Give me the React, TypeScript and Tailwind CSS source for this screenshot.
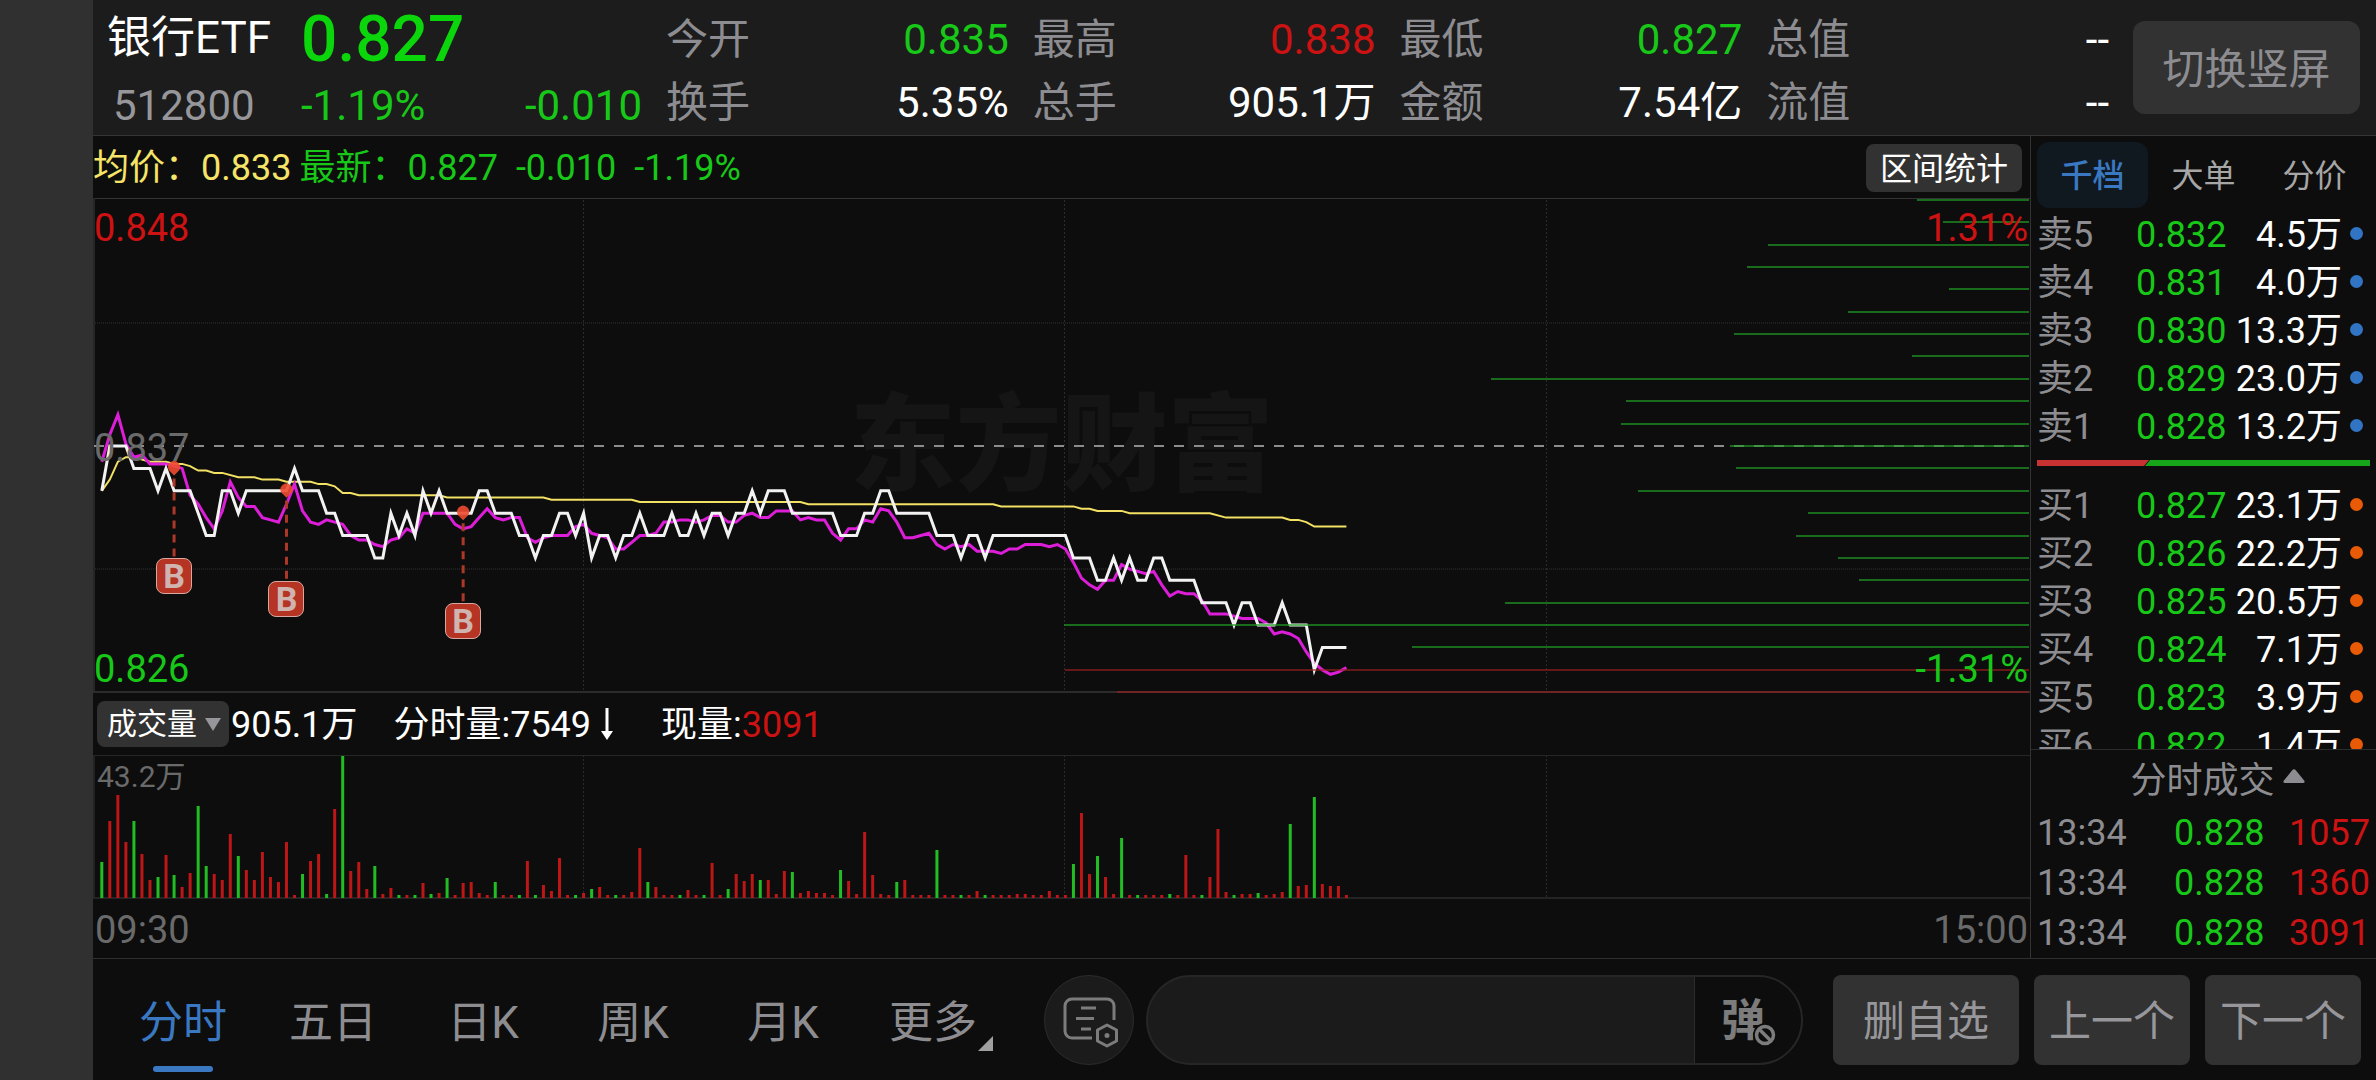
import React from "react";

/* ---------- market data ---------- */

const QUOTES = [
  { label: "今开", value: "0.835", tone: "text-[#18c818]" },
  { label: "最高", value: "0.838", tone: "text-[#cc1212]" },
  { label: "最低", value: "0.827", tone: "text-[#18c818]" },
  { label: "总值", value: "--", tone: "text-white" },
  { label: "换手", value: "5.35%", tone: "text-white" },
  { label: "总手", value: "905.1万", tone: "text-white" },
  { label: "金额", value: "7.54亿", tone: "text-white" },
  { label: "流值", value: "--", tone: "text-white" },
];

const SELLS = [
  ["卖5", "0.832", "4.5万"],
  ["卖4", "0.831", "4.0万"],
  ["卖3", "0.830", "13.3万"],
  ["卖2", "0.829", "23.0万"],
  ["卖1", "0.828", "13.2万"],
];

const BUYS = [
  ["买1", "0.827", "23.1万"],
  ["买2", "0.826", "22.2万"],
  ["买3", "0.825", "20.5万"],
  ["买4", "0.824", "7.1万"],
  ["买5", "0.823", "3.9万"],
  ["买6", "0.822", "1.4万"],
];

const TICKS = [
  ["13:34", "0.828", "1057"],
  ["13:34", "0.828", "1360"],
  ["13:34", "0.828", "3091"],
];

/* Minute series: distance below the 0.837 reference, price in 0.001 steps. */
const PRICE = [
  2, 0, 0, 0, 1, 1, 1, 2, 1, 2, 2, 2, 3, 4, 4, 2, 2, 3, 2, 2, 2, 2, 2, 2, 1, 2, 2, 2, 3, 3, 4, 4, 4, 4, 5, 5, 3, 4, 3,
  4, 2, 3, 2, 3, 3, 3, 3, 2, 2, 3, 3, 3, 4, 4, 5, 4, 4, 3, 3, 4, 3, 5, 4, 4, 5, 4, 4, 3, 4, 4, 4, 3, 4, 4, 3, 4, 3, 3,
  4, 3, 3, 2, 3, 2, 2, 2, 3, 3, 3, 3, 3, 3, 4, 4, 4, 3, 3, 2, 2, 3, 3, 3, 3, 3, 4, 4, 4, 5, 4, 4, 5, 4, 4, 4, 4, 4, 4,
  4, 4, 4, 4, 5, 5, 5, 6, 6, 5, 6, 5, 6, 6, 5, 5, 6, 6, 6, 6, 7, 7, 7, 7, 8, 7, 7, 8, 8, 8, 7, 8, 8, 8, 10, 9, 9, 9,
  9,
];

/* Leading index, in 0.0001 steps. */
const LEAD = [
  7, -5, -14, -1, 5, 4, 8, 8, 8, 9, 10, 22, 26, 32, 37, 29, 16, 23, 27, 27, 32, 33, 34, 26, 17, 29, 34, 35, 33, 34, 35,
  40, 42, 42, 44, 45, 42, 41, 37, 39, 30, 30, 30, 30, 35, 37, 36, 32, 28, 32, 33, 32, 32, 41, 43, 41, 40, 40, 40, 36,
  35, 39, 40, 41, 46, 46, 43, 40, 40, 39, 34, 34, 33, 33, 34, 33, 31, 31, 34, 34, 31, 30, 32, 32, 29, 29, 29, 33, 32,
  33, 33, 39, 42, 37, 37, 33, 34, 28, 29, 34, 41, 41, 40, 39, 44, 46, 44, 45, 44, 47, 47, 47, 48, 46, 46, 44, 44, 44,
  45, 44, 46, 52, 59, 62, 64, 60, 60, 53, 55, 56, 57, 56, 62, 67, 65, 66, 66, 69, 75, 75, 75, 76, 77, 77, 77, 79, 84,
  83, 84, 86, 92, 97, 100, 102, 101, 99,
];

/* Average price, [minute, 0.0001 steps] at each change of slope. */
const AVERAGE: [number, number][] = [
  [0, 20], [1, 15], [2, 7], [3, 5], [4, 5], [6, 7], [8, 7], [9, 8], [10, 8], [11, 9], [12, 11], [13, 11], [14, 12],
  [15, 12], [17, 14], [19, 14], [20, 15], [22, 15], [23, 16], [26, 16], [27, 17], [28, 17], [29, 18], [30, 21],
  [31, 21], [32, 22], [42, 22], [43, 23], [55, 23], [56, 24], [66, 24], [67, 25], [87, 25], [88, 26], [111, 26],
  [112, 27], [121, 27], [122, 28], [123, 28], [124, 29], [127, 29], [128, 30], [138, 30], [140, 32], [147, 32],
  [148, 33], [149, 33], [150, 34], [151, 36], [155, 36],
];

/* Length of each horizontal depth line, from the top price downwards. */
const DEPTH = [
  112, 86, 261, 282, 80, 181, 295, 117, 538, 403, 408, 299, 293, 391, 221, 233, 191, 170, 524, 965, 617, 964, 912,
];

const VOLUME = (
  "g36 r77 r103 r56 g77 r44 r18 g21 r43 g23 r11 r25 g92 g32 r24 r18 r64 g42 r28 r18 r46 r21 r16 r56 r3 g24 r37 r44 g4 " +
  "r89 g142 r27 r36 r9 g32 r4 r10 g3 r3 g3 r15 g4 r5 g20 r3 r15 r16 r5 r3 g16 r3 r3 g3 r37 g3 r13 r7 r40 r3 g3 r5 g9 " +
  "r11 r3 g3 r3 r6 r50 g16 r11 r3 r3 g3 r8 r3 g3 r35 r3 g9 r24 r17 r24 g18 r18 r4 r27 g26 r5 r7 r5 r5 r3 g28 r17 r4 " +
  "r66 r23 r4 r3 g16 r18 r3 r3 r3 g48 r3 r3 g3 r3 r7 g3 r3 r3 r3 r4 r4 r3 r3 r7 r3 r3 g34 r85 r24 g42 r21 r4 g60 r3 " +
  "g3 r3 r3 r3 g4 r3 r43 r3 g3 r21 r69 r6 g3 r4 r4 g5 r3 r4 r6 g74 r12 r13 g101 r14 r12 r12 r3"
).split(" ");

const TRADES = [
  { minute: 9, level: 1 },
  { minute: 23, level: 2 },
  { minute: 45, level: 3 },
];

/* ---------- chart geometry ---------- */

const W = 1937;
const H = 495;
const VH = 144;
const REF = 248;
const STEP = 22.386;
const xAt = (minute: number) => 8.8 + minute * 8.03;
const yAt = (level: number) => REF + level * STEP;
const toPoints = (pairs: [number, number][]) =>
  pairs.map(([m, l]) => `${xAt(m).toFixed(1)},${yAt(l).toFixed(1)}`).join(" ");

const pricePoints = toPoints(PRICE.map((l, i) => [i, l]));
const leadPoints = toPoints(LEAD.map((l, i) => [i, l / 10]));
const averagePoints = toPoints(AVERAGE.map(([m, l]) => [m, l / 10]));
const GRID_MINUTES = [60, 120, 180];

function PriceChart() {
  return (
    <div className="relative min-h-0 flex-1">
      <div className="absolute inset-0 flex items-center justify-center overflow-hidden text-[106px] leading-none font-black text-[#151515]">
        <span>东方财富</span>
      </div>
      <svg
        className="absolute inset-0 h-full w-full"
        viewBox={`0 0 ${W} ${H}`}
        preserveAspectRatio="none"
        fill="none"
        role="img"
        aria-label="分时走势图"
      >
        <path d={`M0 0.5H${W}`} stroke="#333333" />
        <path d={`M1 0V${H}`} stroke="#262626" strokeWidth="2" />
        <path d={`M0 494H${W}`} stroke="#2c2c2c" strokeWidth="2" />
        {GRID_MINUTES.map((m) => (
          <path key={m} d={`M${Math.round(xAt(m)) - 0.5} 2V${H}`} stroke="#2b2b2b" strokeDasharray="2 2" />
        ))}
        <path d={`M0 125H${W}M0 371H${W}`} stroke="#202020" strokeWidth="2" strokeDasharray="1 1" />
        <path d={`M1 ${REF}H${W}`} stroke="#8c8c8c" strokeWidth="2" strokeDasharray="10 10" />
        <polyline points={averagePoints} stroke="#f2e164" strokeWidth="2" />
        <polyline points={leadPoints} stroke="#dc1ed8" strokeWidth="3" />
        <polyline points={pricePoints} stroke="#f2f2f2" strokeWidth="3" />
        {DEPTH.map((len, i) => (
          <path
            key={i}
            d={`M${W - 1 - len} ${Math.round(1.75 + i * STEP)}H${W - 1}`}
            stroke={i > 20 ? "#a02020" : "#1f9a22"}
            strokeOpacity={i > 20 ? 0.6 : 0.68}
            strokeWidth="2"
          />
        ))}
        {TRADES.map(({ minute, level }) => {
          const x = xAt(minute);
          const y = yAt(level);
          return (
            <g key={minute}>
              <path d={`M${x} ${y + 10}V${y + 90}`} stroke="#ab3829" strokeWidth="3" strokeDasharray="8 6" />
              <path
                d={`M${x} ${y + 7}L${x - 5} ${y + 2}A6 6 0 1 1 ${x + 5} ${y + 2}Z`}
                fill="#f04a30"
                fillOpacity="0.9"
              />
            </g>
          );
        })}
      </svg>
      {TRADES.map(({ minute, level }) => (
        <span
          key={minute}
          className="absolute flex h-9 w-9 -translate-x-1/2 items-center justify-center rounded-lg border border-[#d8a8a0] bg-[#b53424] text-[34px] leading-none font-bold text-[#d0b4b0]"
          style={{ left: `${(xAt(minute) / W) * 100}%`, top: `${((yAt(level) + 90) / H) * 100}%` }}
        >
          B
        </span>
      ))}
      <span className="absolute top-[7px] left-px text-[38px] leading-[46px] text-[#cc1212]">0.848</span>
      <span className="absolute top-[227px] left-px text-[38px] leading-[46px] text-[#6a6a6a]">0.837</span>
      <span className="absolute bottom-px left-px text-[38px] leading-[46px] text-[#18c818]">0.826</span>
      <span className="absolute top-[7px] right-0.5 text-[38px] leading-[46px] text-[#cc1212]">1.31%</span>
      <span className="absolute right-0.5 bottom-px text-[38px] leading-[46px] text-[#18c818]">-1.31%</span>
    </div>
  );
}

function VolumeChart() {
  return (
    <div className="relative h-36 shrink-0">
      <svg
        className="block h-full w-full"
        viewBox={`0 0 ${W} ${VH}`}
        preserveAspectRatio="none"
        fill="none"
        role="img"
        aria-label="成交量图"
      >
        <path d={`M0 0.5H${W}`} stroke="#262626" />
        <path d={`M1 0V${VH}`} stroke="#222222" strokeWidth="2" />
        <path d={`M0 143H${W}`} stroke="#242424" strokeWidth="2" />
        {GRID_MINUTES.map((m) => (
          <path key={m} d={`M${Math.round(xAt(m)) - 0.5} 0V${VH}`} stroke="#2b2b2b" strokeDasharray="2 2" />
        ))}
        {VOLUME.map((bar, i) => {
          const h = Number(bar.slice(1));
          return (
            <rect
              key={i}
              x={xAt(i) - 1.5}
              y={143 - h}
              width="3"
              height={h}
              fill={bar[0] === "g" ? "#22bd22" : "#bd1616"}
            />
          );
        })}
      </svg>
      <span className="absolute top-1 left-1 text-[30px] leading-9 text-[#6a6a6a]">43.2万</span>
    </div>
  );
}

/* ---------- header ---------- */

function Header() {
  return (
    <header className="flex h-[136px] shrink-0 items-center border-b border-[#353535] bg-[#1c1c1c] pr-4 pl-3.5">
      <div className="flex w-[535px] shrink-0 pt-1.5">
        <div className="flex w-[170px] flex-col">
          <h1 className="text-[44px] leading-[66px] font-normal whitespace-nowrap text-white">银行ETF</h1>
          <span className="pt-1 pl-1.5 text-[42px] leading-[62px] text-[#97979b]">512800</span>
        </div>
        <div className="ml-6 flex flex-1 flex-col">
          <span className="text-[64px] leading-[70px] font-medium text-[#0bd50b]">0.827</span>
          <span className="flex justify-between text-[42px] leading-[62px] text-[#18c818]">
            <span>-1.19%</span>
            <span>-0.010</span>
          </span>
        </div>
      </div>
      <dl className="ml-6 grid flex-1 grid-cols-4 gap-x-6 pt-1.5">
        {QUOTES.map((q) => (
          <div key={q.label} className="flex justify-between text-[42px] leading-[63px]">
            <dt className="text-[#8d8d91]">{q.label}</dt>
            <dd className={q.tone}>{q.value}</dd>
          </div>
        ))}
      </dl>
      <button
        type="button"
        className="ml-6 h-[93px] w-[227px] rounded-xl bg-[#323232] pt-1 text-[42px] text-[#8d8d91]"
      >
        切换竖屏
      </button>
    </header>
  );
}

function InfoBar() {
  return (
    <div className="flex h-[62px] shrink-0 items-center pt-0.5 text-[36px] leading-[44px]">
      <span className="text-[#f5e468]">均价：0.833</span>
      <span className="ml-2 text-[#18c818]">最新：0.827</span>
      <span className="ml-4.5 text-[#18c818]">-0.010</span>
      <span className="ml-4.5 text-[#18c818]">-1.19%</span>
      <button type="button" className="mr-2 ml-auto h-12 w-[156px] rounded-lg bg-[#323232] pt-0.5 text-[32px] text-white">
        区间统计
      </button>
    </div>
  );
}

function VolumeBar() {
  return (
    <div className="flex h-[62px] shrink-0 items-center pl-1 text-[36px] leading-[44px] text-white">
      <div className="relative mr-0.5">
        <select
          aria-label="指标"
          defaultValue="vol"
          className="block h-[46px] w-[132px] appearance-none rounded-lg bg-[#323232] pl-2.5 text-[30px] leading-[46px] text-white"
        >
          <option value="vol">成交量</option>
        </select>
        <svg className="pointer-events-none absolute top-4 right-2 h-4 w-4" viewBox="0 0 16 16" aria-hidden="true">
          <path d="M0 1H16L8 14Z" fill="#97979b" />
        </svg>
      </div>
      <span className="pt-0.5">905.1万</span>
      <span className="ml-9 pt-0.5">分时量:7549</span>
      <svg className="ml-2 h-8 w-4" viewBox="0 0 16 32" aria-label="下降" role="img">
        <path d="M8 0V28" stroke="#fff" strokeWidth="3" />
        <path d="M2 23H14L8 32Z" fill="#fff" />
      </svg>
      <span className="ml-[46px] pt-0.5">
        现量:<span className="text-[#cc1212]">3091</span>
      </span>
    </div>
  );
}

/* ---------- order book ---------- */

function DepthTable({ rows, dot, name }: { rows: string[][]; dot: string; name: string }) {
  return (
    <table aria-label={name} className="w-full table-fixed text-left text-[36px] leading-[48px]">
      <colgroup>
        <col className="w-[99px]" />
        <col className="w-[92px]" />
        <col />
        <col className="w-[28px]" />
      </colgroup>
      <tbody>
        {rows.map(([label, price, amount]) => (
          <tr key={label} className="h-12">
            <th scope="row" className="p-0 font-normal text-[#8d8d91]">
              {label}
            </th>
            <td className="p-0 text-[#18c818]">{price}</td>
            <td className="p-0 text-right whitespace-nowrap text-white">{amount}</td>
            <td className="p-0">
              <span className={`mx-auto mb-1 block h-[13px] w-[13px] rounded-full ${dot}`} />
            </td>
          </tr>
        ))}
      </tbody>
    </table>
  );
}

function OrderPanel() {
  return (
    <aside className="flex w-[346px] shrink-0 flex-col border-l border-[#333333]">
      <div className="flex min-h-0 flex-1 flex-col overflow-hidden px-1.5 pt-1.5">
        <div className="mb-[3px] grid h-[66px] shrink-0 grid-cols-3 text-[32px]">
          <button type="button" className="rounded-xl bg-[#101820] pt-0.5 font-medium text-[#3a78c2]">
            千档
          </button>
          <button type="button" className="pt-0.5 text-[#a6a6a6]">
            大单
          </button>
          <button type="button" className="pt-0.5 text-[#a6a6a6]">
            分价
          </button>
        </div>
        <DepthTable rows={SELLS} dot="bg-[#3174c4]" name="卖盘" />
        <svg className="mt-[9px] mb-4 h-1.5 w-full shrink-0" viewBox="0 0 333 6" preserveAspectRatio="none" aria-hidden="true">
          <path d="M0 0H112L107 6H0Z" fill="#c83232" />
          <path d="M113 0H333V6H108Z" fill="#17a61a" />
        </svg>
        <DepthTable rows={BUYS} dot="bg-[#e85a06]" name="买盘" />
      </div>
      <div className="shrink-0 border-t border-[#2c2c2c] px-1.5">
        <button
          type="button"
          className="flex h-[58px] w-full items-center justify-center gap-2 pt-1 pl-7 text-[36px] leading-none text-[#8d8d91]"
        >
          分时成交
          <svg className="mb-2.5 h-3.5 w-[22px]" viewBox="0 0 22 14" aria-hidden="true">
            <path d="M9 1.5Q11-1 13 1.5L21.5 12Q22 14 20 14H2Q0 14 0.500 12Z" fill="#8d8d91" />
          </svg>
        </button>
        <table aria-label="分时成交" className="w-full table-fixed text-left text-[36px] leading-[50px]">
          <colgroup>
            <col className="w-[137px]" />
            <col className="w-[96px]" />
            <col />
          </colgroup>
          <tbody>
            {TICKS.map(([time, price, amount]) => (
              <tr key={amount}>
                <td className="p-0 text-[#8d8d91]">{time}</td>
                <td className="p-0 text-[#18c818]">{price}</td>
                <td className="p-0 text-right text-[#cc1212]">{amount}</td>
              </tr>
            ))}
          </tbody>
        </table>
      </div>
    </aside>
  );
}

/* ---------- footer ---------- */

const TABS = ["分时", "五日", "日K", "周K", "月K", "更多"];

function Footer() {
  return (
    <footer className="flex h-[122px] shrink-0 items-center border-t border-[#2f2f2f] pr-[15px] pl-[15px]">
      <nav className="flex h-full w-[900px] shrink-0 text-[44px]">
        {TABS.map((tab, i) => (
          <button
            key={tab}
            type="button"
            className={`relative flex flex-1 items-center justify-center pt-1.5 ${i === 0 ? "text-[#3a78c2]" : "text-[#8d8d91]"}`}
          >
            {tab}
            {i === 0 && <span className="absolute bottom-2 h-1.5 w-[60px] rounded-[3px] bg-[#3a78c2]" />}
            {i === 5 && (
              <svg className="absolute right-[15px] bottom-[29px] h-[15px] w-[15px]" viewBox="0 0 15 15" aria-hidden="true">
                <path d="M15 0V15H0Z" fill="#a0a0a0" />
              </svg>
            )}
          </button>
        ))}
      </nav>
      <button
        type="button"
        aria-label="设置"
        className="ml-9 h-[90px] w-[90px] shrink-0 rounded-full border border-[#2c2c2c] bg-[#1b1b1b]"
      >
        <svg viewBox="0 0 88 88" fill="none" stroke="#7c7c7c" strokeWidth="3" aria-hidden="true">
          <path d="M69 44V30a7 7 0 0 0-7-7H27a7 7 0 0 0-7 7V55a7 7 0 0 0 7 7H47" />
          <path d="M36 32H51M31 42.500H49M36 53H46" />
          <path d="M62 49L71.500 54V65L62 70L52.500 65V54Z" strokeLinejoin="round" />
          <circle cx="62" cy="59.500" r="2.500" fill="#7c7c7c" stroke="none" />
        </svg>
      </button>
      <div className="ml-3 flex h-[90px] flex-1 overflow-hidden rounded-full border-2 border-[#262626] bg-[#1b1b1b]">
        <input type="text" aria-label="发弹幕" className="min-w-0 flex-1 bg-transparent px-8 text-[36px] text-white outline-none" />
        <button
          type="button"
          aria-label="关闭弹幕"
          className="relative w-[107px] border-l border-[#2c2c2c] bg-[#0d0d0d] pr-2.5 pt-0.5 text-[44px] leading-none font-bold text-[#7c7c7c]"
        >
          弹
          <svg className="absolute right-6 bottom-4 h-6 w-6" viewBox="0 0 24 24" fill="none" aria-hidden="true">
            <circle cx="12" cy="12" r="12" fill="#0d0d0d" />
            <circle cx="12" cy="12" r="8.500" stroke="#7c7c7c" strokeWidth="3.500" />
            <path d="M6 6L18 18" stroke="#7c7c7c" strokeWidth="3.500" />
          </svg>
        </button>
      </div>
      <div className="ml-[30px] flex gap-[15px] text-[42px] text-[#97979b]">
        <button type="button" className="h-[90px] w-[186px] rounded-lg bg-[#323232] pt-1">
          删自选
        </button>
        <button type="button" className="h-[90px] w-[156px] rounded-lg bg-[#323232] pt-1">
          上一个
        </button>
        <button type="button" className="h-[90px] w-[156px] rounded-lg bg-[#323232] pt-1">
          下一个
        </button>
      </div>
    </footer>
  );
}

export default function App() {
  return (
    <div className="flex h-screen bg-[#0d0d0d] font-['Roboto','Noto_Sans_CJK_SC',sans-serif]">
      <div className="w-[93px] shrink-0 bg-[#303030]" />
      <div className="flex min-w-0 flex-1 flex-col">
        <Header />
        <main className="flex min-h-0 flex-1">
          <section className="flex min-w-0 flex-1 flex-col">
            <InfoBar />
            <PriceChart />
            <VolumeBar />
            <VolumeChart />
            <div className="flex h-[59px] shrink-0 items-center justify-between px-0.5 pt-0.5 text-[38px] leading-none text-[#6a6a6a]">
              <span>09:30</span>
              <span>15:00</span>
            </div>
          </section>
          <OrderPanel />
        </main>
        <Footer />
      </div>
    </div>
  );
}
